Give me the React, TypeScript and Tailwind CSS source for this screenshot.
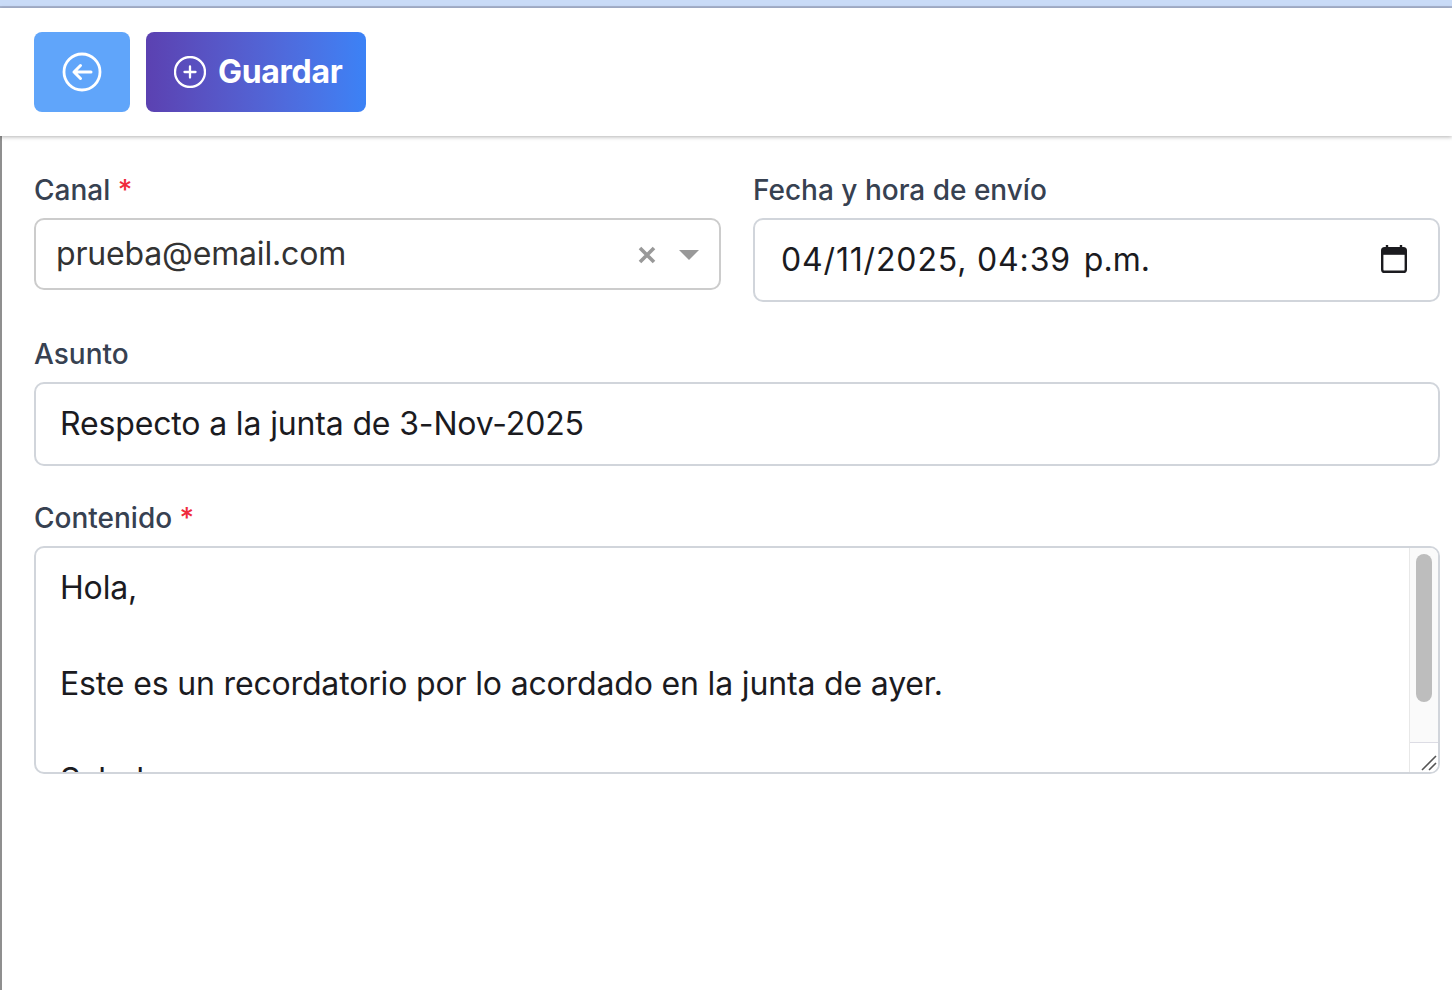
function BackIcon() {
  return (
    <svg width="40" height="40" viewBox="0 0 40 40" fill="none" stroke="white" strokeWidth="2.8" strokeLinecap="round" strokeLinejoin="round">
      <circle cx="20" cy="20" r="18" />
      <path d="M29 20H12M18.5 13.5L12 20l6.5 6.5" strokeWidth="3" />
    </svg>
  )
}

function PlusIcon() {
  return (
    <svg width="32" height="32" viewBox="0 0 32 32" fill="none" stroke="white" strokeWidth="2.3" strokeLinecap="round">
      <circle cx="16" cy="16" r="15" />
      <path d="M16 10.5v11M10.5 16h11" />
    </svg>
  )
}

function CalendarIcon() {
  return (
    <svg width="26" height="28" viewBox="0 0 26 28" fill="none" className="mb-[2px]">
      <path d="M6 0.5v5M20 0.5v5" stroke="#1b1b1f" strokeWidth="2.4" strokeLinecap="round" />
      <rect x="1.2" y="3.2" width="23.6" height="23.6" rx="2.4" stroke="#1b1b1f" strokeWidth="2.4" />
      <rect x="1.2" y="3.2" width="23.6" height="6.6" fill="#1b1b1f" />
    </svg>
  )
}

function Label({ text, required }: { text: string; required?: boolean }) {
  return (
    <label className="block h-[40px] text-[28px] leading-[40px] font-medium text-[#374151]">
      {text}
      {required && <span className="text-[#ef2b3c]"> *</span>}
    </label>
  )
}

export default function App() {
  return (
    <div className="h-[990px] overflow-hidden bg-white font-['Inter',sans-serif]">
      <div className="h-[8px] bg-[#c9dbf7] border-b-2 border-[#a9b5d0]" />

      <div className="relative z-10 h-[128px] flex items-start gap-4 px-[34px] pt-6 bg-white shadow-[0_1px_4px_rgba(0,0,0,0.3)]">
        <button className="w-[96px] h-[80px] flex items-center justify-center rounded-lg bg-[#60a5fa]">
          <BackIcon />
        </button>
        <button className="w-[220px] h-[80px] flex items-center gap-3 pl-[28px] rounded-lg bg-gradient-to-r from-[#5b41b1] to-[#3b82f6] text-white text-[32px] font-bold tracking-[-0.3px]">
          <PlusIcon />
          Guardar
        </button>
      </div>

      <div className="h-[854px] border-l-2 border-[#8f8f8f] pl-[32px] pr-[12px] pt-[34px]">
        <div className="grid grid-cols-2 gap-8 items-start">
          <div>
            <Label text="Canal" required />
            <div className="mt-2 h-[72px] flex items-center pl-[20px] pr-[20px] rounded-[10px] border-2 border-[#cccccc] text-[32px] tracking-[-0.18px] text-[#333333]">
              <span className="flex-1">prueba@email.com</span>
              <svg width="20" height="20" viewBox="0 0 20 20" stroke="#999999" strokeWidth="3.6" className="mr-[22px] mt-[1px]">
                <path d="M3 3l14 14M17 3L3 17" />
              </svg>
              <svg width="20" height="10" viewBox="0 0 20 10" fill="#999999" className="mt-[1px]">
                <path d="M0 0h20L10 10z" />
              </svg>
            </div>
          </div>
          <div>
            <Label text="Fecha y hora de envío" />
            <div className="mt-2 h-[84px] flex items-center justify-between pl-[26px] pr-[31px] rounded-[10px] border-2 border-[#d1d5db] text-[32px] text-[#1b1b1f]">
              <span className="flex items-center whitespace-pre">
                <span className="tracking-[0.84px]">04/11/2025, </span>
                <span className="tracking-[0.84px]">04:39 </span>
                <span className="ml-[3px]">p.m.</span>
              </span>
              <CalendarIcon />
            </div>
          </div>
        </div>

        <div className="mt-[32px]">
          <Label text="Asunto" />
          <div className="mt-2 h-[84px] flex items-center px-[24px] rounded-[10px] border-2 border-[#d1d5db] text-[32px] tracking-[-0.15px] text-[#1b1b1f]">
            Respecto a la junta de 3-Nov-2025
          </div>
        </div>

        <div className="mt-[32px]">
          <Label text="Contenido" required />
          <div className="mt-2 h-[228px] flex overflow-hidden rounded-[10px] border-2 border-[#d1d5db]">
            <div className="flex-1 px-[24px] pt-[16px] text-[32px] leading-[48px] tracking-[-0.16px] text-[#1b1b1f]">
              <div>Hola,</div>
              <div className="h-[48px]" />
              <div>Este es un recordatorio por lo acordado en la junta de ayer.</div>
              <div className="h-[48px]" />
              <div>Saludos</div>
            </div>
            <div className="w-[29px] flex flex-col bg-[#fafafa] border-l border-[#e8e8e8]">
              <div className="flex-1 pt-[6px] flex justify-center">
                <div className="w-[16px] h-[148px] rounded-full bg-[#bdbdbd]" />
              </div>
              <div className="h-[30px] flex items-end justify-end border-t border-[#dcdce4] bg-white">
                <svg width="16" height="16" viewBox="0 0 16 16" stroke="#555555" strokeWidth="1.6" className="mb-[1px] mr-[1px]">
                  <path d="M1 15L15 1M8 15l7-7" />
                </svg>
              </div>
            </div>
          </div>
        </div>
      </div>
    </div>
  )
}
